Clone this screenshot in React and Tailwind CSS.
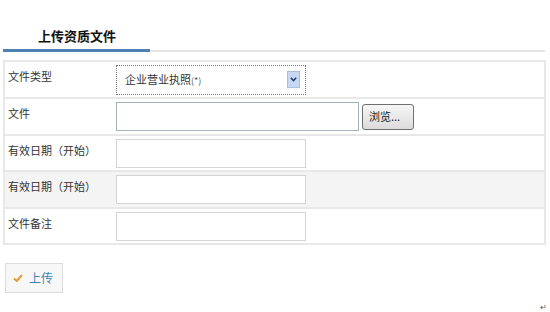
export default function App() {
  const font = { fontFamily: '"Noto Sans CJK SC", "Noto Sans", sans-serif' };
  const label = "w-[111px] shrink-0 self-start pt-[7px] pl-[3px] text-[11px] leading-[14px] text-[#333]";
  const input = "w-[190px] h-[29px] border border-[#d4d4d4] bg-white";
  return (
    <div className="w-[550px] h-[312px] bg-white overflow-hidden" style={font}>
      <div className="flex items-end pl-[3px] pr-[5px]">
        <div className="w-[147px] pl-[35px] pt-[28px] pb-[5px] border-b-[3px] border-[#4f81b3] text-[13px] leading-[16px] font-bold text-[#111]">
          上传资质文件
        </div>
        <div className="flex-1 border-b-2 border-[#e4e4e4]"></div>
      </div>

      <div className="mt-[8px] ml-[3px] mr-[4px] border-2 border-[#e8e8e8]">
        <div className="flex items-center h-[37px] border-b-2 border-[#e8e8e8]">
          <div className={label}>文件类型</div>
          <div className="relative w-[190px] h-[30px] border border-dotted border-[#777] bg-white flex items-center">
            <span className="pl-[8px] text-[11px] text-[#333]">企业营业执照<span className="text-[9px] text-[#555]">(*)</span></span>
            <div className="absolute right-[5px] top-[5px] w-[13px] h-[17px] bg-[#c8d8f4] border border-[#a9bddf] flex items-center justify-center">
              <svg width="7" height="5" viewBox="0 0 7 5"><path d="M0.8 0.8 L3.5 3.6 L6.2 0.8" fill="none" stroke="#1f3a6e" strokeWidth="1.6" /></svg>
            </div>
          </div>
        </div>

        <div className="flex items-center h-[37px] border-b-2 border-[#e8e8e8]">
          <div className={label}>文件</div>
          <div className="w-[243px] h-[29px] border border-[#a7b1bd] bg-white"></div>
          <div className="ml-[3px] w-[52px] h-[26px] rounded-[3px] border border-[#6f6f6f] bg-gradient-to-b from-[#f6f6f6] to-[#dcdcdc] flex items-center pl-[6px] text-[11px] text-[#222]">
            浏览...
          </div>
        </div>

        <div className="flex items-center h-[36px] border-b-2 border-[#e8e8e8]">
          <div className={label}>有效日期（开始）</div>
          <div className={input}></div>
        </div>

        <div className="flex items-center h-[37px] border-b-2 border-[#e8e8e8] bg-[#f4f4f4]">
          <div className={label}>有效日期（开始）</div>
          <div className={input}></div>
        </div>

        <div className="flex items-center h-[34px]">
          <div className={label}>文件备注</div>
          <div className={input}></div>
        </div>
      </div>

      <div className="mt-[18px] ml-[5px] w-[58px] h-[30px] border border-[#dcdcdc] bg-[#f7f7f7] flex items-center pl-[7px] gap-[6px]">
        <svg width="10" height="8" viewBox="0 0 10 8"><path d="M1 4.5 L3.8 7 L9 1" fill="none" stroke="#e39b2c" strokeWidth="2" /></svg>
        <span className="text-[12px] text-[#3f84b5]">上传</span>
      </div>

      <div className="flex justify-end pr-[3px] mt-[10px] text-[8px] leading-[8px] text-[#555]">↵</div>
    </div>
  );
}
